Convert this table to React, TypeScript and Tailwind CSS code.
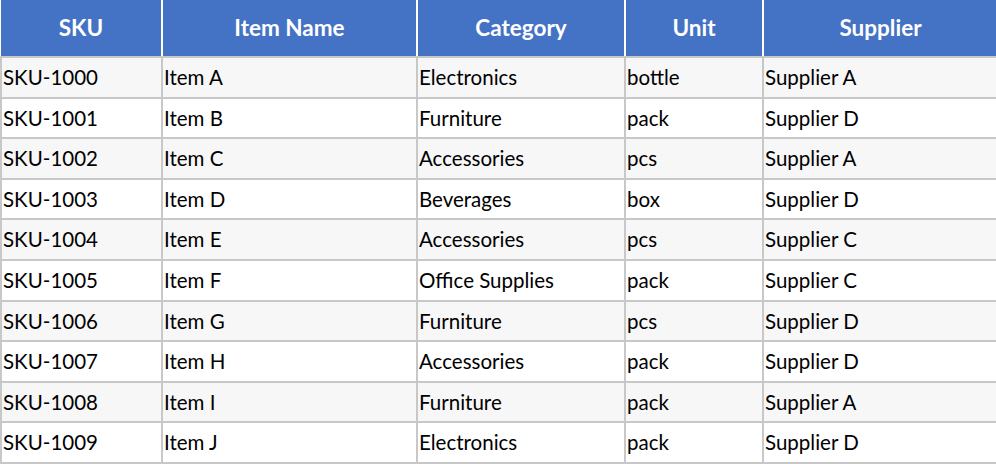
import React from 'react';

type Item = { sku: string; name: string; category: string; unit: string; supplier: string };

const items: Item[] = [
  { sku: 'SKU-1000', name: 'Item A', category: 'Electronics', unit: 'bottle', supplier: 'Supplier A' },
  { sku: 'SKU-1001', name: 'Item B', category: 'Furniture', unit: 'pack', supplier: 'Supplier D' },
  { sku: 'SKU-1002', name: 'Item C', category: 'Accessories', unit: 'pcs', supplier: 'Supplier A' },
  { sku: 'SKU-1003', name: 'Item D', category: 'Beverages', unit: 'box', supplier: 'Supplier D' },
  { sku: 'SKU-1004', name: 'Item E', category: 'Accessories', unit: 'pcs', supplier: 'Supplier C' },
  { sku: 'SKU-1005', name: 'Item F', category: 'Office Supplies', unit: 'pack', supplier: 'Supplier C' },
  { sku: 'SKU-1006', name: 'Item G', category: 'Furniture', unit: 'pcs', supplier: 'Supplier D' },
  { sku: 'SKU-1007', name: 'Item H', category: 'Accessories', unit: 'pack', supplier: 'Supplier D' },
  { sku: 'SKU-1008', name: 'Item I', category: 'Furniture', unit: 'pack', supplier: 'Supplier A' },
  { sku: 'SKU-1009', name: 'Item J', category: 'Electronics', unit: 'pack', supplier: 'Supplier D' },
];

const headers = ['SKU', 'Item Name', 'Category', 'Unit', 'Supplier'];

const App = () => {
  return (
    <div className="w-[996px] bg-white font-['Lato','Liberation_Sans',sans-serif]">
      <table className="w-[996px] table-fixed border-collapse text-[20.5px] text-black">
        <colgroup>
          <col className="w-[161px]" />
          <col className="w-[255px]" />
          <col className="w-[208px]" />
          <col className="w-[138px]" />
          <col className="w-[234px]" />
        </colgroup>
        <thead>
          <tr className="h-[57px] bg-[#4472c4]">
            {headers.map((h, i) => (
              <th
                key={h}
                className={`border-b-2 border-b-[#c8c8c8] text-center align-middle text-[22.5px] font-bold text-white ${
                  i < headers.length - 1 ? 'border-r-2 border-r-white' : ''
                }`}
              >
                {h}
              </th>
            ))}
          </tr>
        </thead>
        <tbody>
          {items.map((it, r) => (
            <tr key={it.sku} className={`h-[40.6px] ${r % 2 === 0 ? 'bg-[#f7f7f7]' : 'bg-white'}`}>
              {[it.sku, it.name, it.category, it.unit, it.supplier].map((v, i) => (
                <td key={i} className="border-2 border-[#c8c8c8] px-[1px] align-middle leading-none">
                  {v}
                </td>
              ))}
            </tr>
          ))}
        </tbody>
      </table>
    </div>
  );
};

export default App;
